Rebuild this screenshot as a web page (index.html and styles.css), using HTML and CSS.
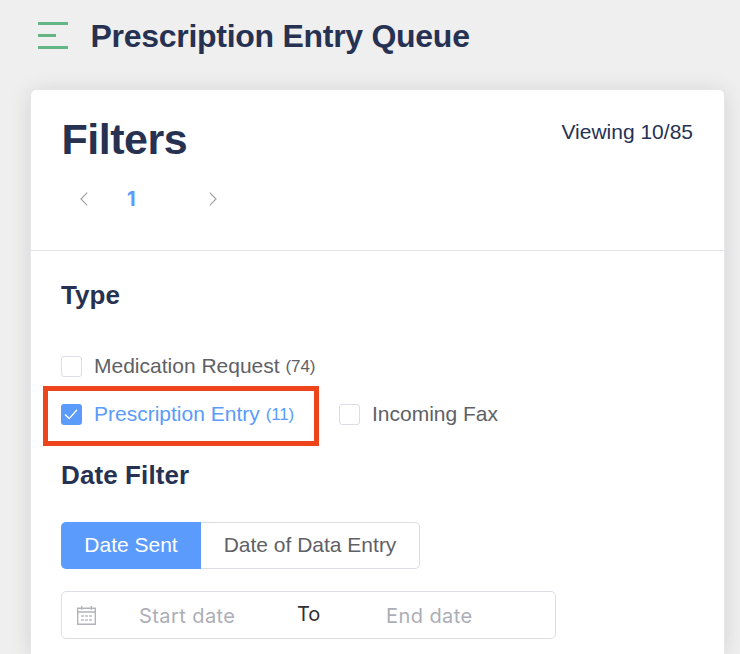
FILE: index.html
```html
<!DOCTYPE html>
<html lang="en">
<head>
<meta charset="utf-8">
<title>Prescription Entry Queue</title>
<link rel="stylesheet" href="styles.css">
</head>
<body>
<header class="page-header">
  <svg class="menu-icon" width="30" height="27" viewBox="0 0 30 27" fill="#63b583"><path d="M0 0h30v3H0zM0 12h18v3H0zM0 24h30v3H0z"/></svg>
  <h1 class="page-title">Prescription Entry Queue</h1>
</header>
<main class="card">
  <section class="card-head">
    <div class="head-row">
      <h2 class="filters-title">Filters</h2>
      <span class="viewing">Viewing 10/85</span>
    </div>
    <nav class="pager">
      <svg class="chevron" width="8" height="14" viewBox="0 0 8 14"><path d="M7.2.7 1 7l6.200 6.300"/></svg>
      <span class="page-number">1</span>
      <svg class="chevron" width="8" height="14" viewBox="0 0 8 14"><path d="M.8.7 7 7 .8 13.300"/></svg>
    </nav>
  </section>
  <section class="card-body">
    <h3 class="section-title type-title">Type</h3>
    <div class="options">
      <div class="option">
        <span class="box"></span>
        <span class="label">Medication Request</span><span class="count">(74)</span>
      </div>
      <div class="option-row">
        <div class="option checked">
          <span class="box"><svg width="21" height="21" viewBox="0 0 21 21"><path d="m4 10.600 4.200 4L16 5.800"/></svg></span>
          <span class="label">Prescription Entry</span><span class="count">(11)</span>
          <span class="highlight"></span>
        </div>
        <div class="option">
          <span class="box"></span>
          <span class="label">Incoming Fax</span>
        </div>
      </div>
    </div>
    <h3 class="section-title date-title">Date Filter</h3>
    <div class="segments">
      <button class="segment active">Date Sent</button>
      <button class="segment">Date of Data Entry</button>
    </div>
    <div class="date-range">
      <svg class="calendar" width="19" height="19" viewBox="0 0 19 19"><path class="frame" d="M.7 2.200h17.600v16.100H.7zM.7 6h17.600"/><path class="frame" d="M4.700 0v3.700M14.300 0v3.700"/><path class="dots" d="M4.200 10h2.600m1.400 0h2.600m1.400 0h2.600M4.200 14h2.600m1.400 0h2.600m1.400 0h2.600"/></svg>
      <span class="placeholder">Start date</span>
      <span class="to">To</span>
      <span class="placeholder">End date</span>
    </div>
  </section>
</main>
</body>
</html>
```
FILE: styles.css
```css
* { box-sizing: border-box; }
body {
  margin: 0;
  height: 654px;
  background: #efefef;
  color: #273253;
  font-family: "Liberation Sans", Arial, sans-serif;
}
h1, h2, h3 { margin: 0; font-weight: 700; white-space: nowrap; }
svg { display: block; flex: none; }
.page-header {
  display: flex;
  align-items: flex-start;
  height: 90px;
  padding: 22px 0 0 38px;
}
.page-title { margin: -4px 0 0 22.500px; font-size: 32px; line-height: 36px; letter-spacing: -.28px; }
.card {
  width: 693px;
  height: 564px;
  margin-left: 31px;
  background: #fff;
  border-radius: 5px 5px 0 0;
  box-shadow: 0 0 0 1px #e6e6eb, 0 2px 22px rgba(0, 0, 0, .13);
}
.card-head { height: 161px; padding: 24px 31px 0 30px; border-bottom: 1px solid #e4e4e9; }
.head-row { display: flex; justify-content: space-between; }
.filters-title { margin-left: .5px; font-size: 43px; line-height: 50px; letter-spacing: -.5px; }
.viewing { margin-top: 6px; font-size: 21px; line-height: 24px; }
.pager { display: flex; align-items: center; height: 24px; margin-top: 23px; padding-left: 19px; }
.chevron { fill: none; stroke: #a2a3a9; stroke-width: 1.2; }
.page-number { width: 12px; margin: 0 70px 0 39px; color: #5a9bfb; font: 700 20px/24px Inter, sans-serif; }
.card-body { padding: 28px 30px 0; }
.section-title { font-size: 26px; line-height: 32px; letter-spacing: .1px; }
.options { margin-top: 43px; }
.option { position: relative; display: flex; align-items: center; height: 24px; color: #606166; font-size: 21px; white-space: nowrap; }
.option-row { display: flex; margin-top: 24px; }
.option-row .option:first-child { width: 278px; }
.box { flex: none; width: 21px; height: 21px; margin-right: 12px; border: 1px solid #dcdee6; border-radius: 3px; }
.checked { color: #5a9bfb; }
.checked .box { border: 0; background: #5a9bfb; }
.box svg { fill: none; stroke: #fff; stroke-width: 1.4; }
.count { margin: 2px 0 0 6px; font-size: 17px; letter-spacing: -.15px; }
.highlight { position: absolute; left: -18px; top: -16px; width: 276px; height: 60px; border: 5px solid #ee441b; }
.date-title { margin-top: 33px; }
.segments { display: flex; height: 47px; margin-top: 31px; }
.segment { width: 219px; padding: 0 0 2px; border: 1px solid #dcdee6; border-left: 0; border-radius: 0 5px 5px 0; background: #fff; color: #606166; font: 21px "Liberation Sans", Arial, sans-serif; white-space: nowrap; }
.segment.active { width: 140px; border: 0; border-radius: 5px 0 0 5px; background: #5a9bfb; color: #fff; }
.date-range { display: flex; align-items: center; width: 495px; height: 48px; margin-top: 22px; padding-left: 15px; border: 1px solid #dcdee6; border-radius: 5px; }
.calendar { fill: none; stroke: #b3b4b9; stroke-width: 1.4; }
.placeholder { margin-top: 2px; color: #acaeb6; font: 20px Inter, sans-serif; letter-spacing: .42px; white-space: nowrap; }
.calendar + .placeholder { width: 158px; margin-left: 43px; }
.to { width: 89px; margin-top: -2px; color: #303133; font: 20px Inter, sans-serif; }
```
